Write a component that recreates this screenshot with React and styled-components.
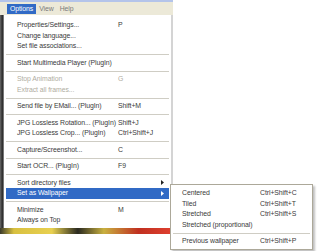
import styled, { createGlobalStyle } from 'styled-components';

const GlobalStyle = createGlobalStyle`
  html, body {
    margin: 0;
    padding: 0;
    background: #ffffff;
  }
`;

const mainItems = [
  { label: 'Properties/Settings...', key: 'P' },
  { label: 'Change language...' },
  { label: 'Set file associations...' },
  { sep: true },
  { label: 'Start Multimedia Player (PlugIn)' },
  { sep: true },
  { label: 'Stop Animation', key: 'G', disabled: true },
  { label: 'Extract all frames...', disabled: true },
  { sep: true },
  { label: 'Send file by EMail... (PlugIn)', key: 'Shift+M' },
  { sep: true },
  { label: 'JPG Lossless Rotation... (PlugIn)', key: 'Shift+J' },
  { label: 'JPG Lossless Crop... (PlugIn)', key: 'Ctrl+Shift+J' },
  { sep: true },
  { label: 'Capture/Screenshot...', key: 'C' },
  { sep: true },
  { label: 'Start OCR... (PlugIn)', key: 'F9' },
  { sep: true },
  { label: 'Sort directory files', sub: true },
  { label: 'Set as Wallpaper', sub: true, active: true },
  { sep: true },
  { label: 'Minimize', key: 'M' },
  { label: 'Always on Top' }
];

const wallpaperItems = [
  { label: 'Centered', key: 'Ctrl+Shift+C' },
  { label: 'Tiled', key: 'Ctrl+Shift+T' },
  { label: 'Stretched', key: 'Ctrl+Shift+S' },
  { label: 'Stretched (proportional)' },
  { sep: true },
  { label: 'Previous wallpaper', key: 'Ctrl+Shift+P' }
];

const SubArrow = ({ color }) => (
  <svg width="3" height="5" viewBox="0 0 3 5">
    <path d="M0 0 L3 2.5 L0 5 Z" fill={color} />
  </svg>
);

const App = () => {
  return (
    <Page>
      <GlobalStyle />
      <Window>
        <MenuBar>
          <BarItem active>Options</BarItem>
          <BarItem>View</BarItem>
          <BarItem>Help</BarItem>
        </MenuBar>
        <Body>
          <Frame />
          <Menu>
            {mainItems.map((item, i) =>
              item.sep ? (
                <Separator key={i} />
              ) : (
                <Item key={i} active={item.active} disabled={item.disabled}>
                  <span>{item.label}</span>
                  <span>{item.key}</span>
                  <ArrowCell>
                    {item.sub && <SubArrow color={item.active ? '#ffffff' : '#222222'} />}
                  </ArrowCell>
                </Item>
              )
            )}
          </Menu>
        </Body>
        <PictureStrip />
      </Window>
      <SubMenu>
        {wallpaperItems.map((item, i) =>
          item.sep ? (
            <SubSeparator key={i} />
          ) : (
            <SubItem key={i}>
              <span>{item.label}</span>
              <span>{item.key}</span>
            </SubItem>
          )
        )}
      </SubMenu>
    </Page>
  );
};

export default App;

const Page = styled.div`
  position: relative;
  width: 320px;
  height: 251px;
  overflow: hidden;
  background: #ffffff;
  font-family: 'Liberation Sans', Arial, sans-serif;
  font-size: 6.9px;
  letter-spacing: -0.08px;
  color: #3a3a3a;
`;

const Window = styled.div`
  width: 175px;
  display: flex;
  flex-direction: column;
`;

const MenuBar = styled.div`
  height: 13px;
  background: #ece9d8;
  border-top: 2px solid #b4c4ea;
  display: flex;
  align-items: center;
  padding-left: 7px;
  width: 166px;
`;

const BarItem = styled.div`
  height: 10px;
  line-height: 10px;
  padding: 0 3px;
  margin-right: 0;
  color: ${p => (p.active ? '#ffffff' : '#7a7a7a')};
  background: ${p => (p.active ? '#316ac5' : 'transparent')};
`;

const Body = styled.div`
  display: flex;
`;

const Frame = styled.div`
  width: 4px;
  background: linear-gradient(90deg, #6a6a6a, #2a2a2a 60%, #9a9a9a);
`;

const Menu = styled.div`
  width: 167px;
  background: #ffffff;
  border-right: 2px solid #d4d4d4;
  padding: 5px 0 2px;
  display: flex;
  flex-direction: column;
`;

const Item = styled.div`
  height: 10.5px;
  line-height: 10.5px;
  margin: 0 2px;
  padding-left: 11px;
  display: grid;
  grid-template-columns: 101px 1fr 8px;
  white-space: nowrap;
  background: ${p => (p.active ? '#316ac5' : 'transparent')};
  color: ${p => (p.active ? '#ffffff' : p.disabled ? '#b0ad9f' : '#3a3a3a')};
`;

const ArrowCell = styled.span`
  display: flex;
  align-items: center;
`;

const Separator = styled.div`
  height: 1px;
  margin: 2.5px 2px;
  background: #cfcdc4;
`;

const PictureStrip = styled.div`
  height: 6px;
  width: 173px;
  background: linear-gradient(
    90deg,
    #3a3a2a 0%,
    #d8c040 8%,
    #e8d050 30%,
    #2a2a20 45%,
    #c8b040 60%,
    #c03020 80%,
    #e04030 100%
  );
`;

const SubMenu = styled.div`
  position: absolute;
  left: 170px;
  top: 184px;
  width: 141px;
  padding: 3px 0 2px;
  background: #ffffff;
  border: 1px solid #aca899;
  box-shadow: 2px 2px 2px rgba(0, 0, 0, 0.25);
  display: flex;
  flex-direction: column;
`;

const SubItem = styled.div`
  height: 10.5px;
  line-height: 10.5px;
  padding-left: 11px;
  display: grid;
  grid-template-columns: 78px 1fr;
  white-space: nowrap;
`;

const SubSeparator = styled.div`
  height: 1px;
  margin: 2.5px 2px;
  background: #cfcdc4;
`;
